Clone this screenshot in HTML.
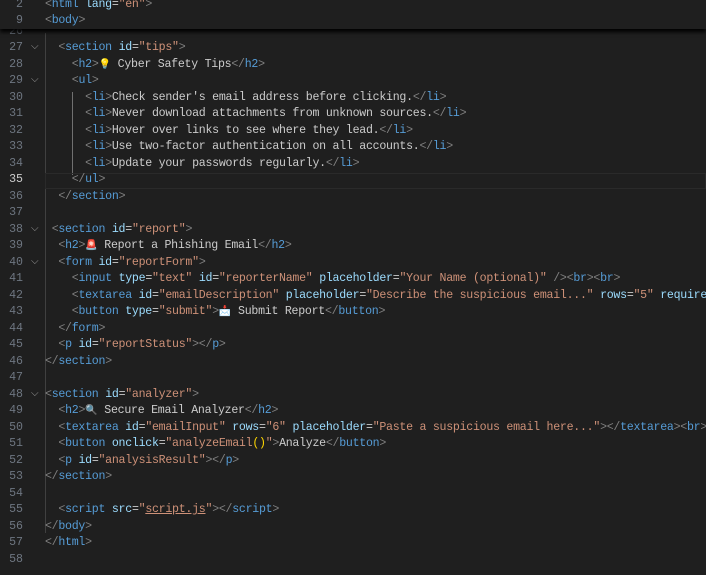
<!DOCTYPE html>
<html><head><meta charset="utf-8"><style>
body{margin:0;width:706px;height:573px;background:#1f1f1f;overflow:hidden;position:relative;font-family:"Liberation Mono",monospace;font-size:11.6px;letter-spacing:-0.27px;}
.w{position:absolute;left:0;top:1.5px;width:706px;height:573px}
.l{position:absolute;left:0;width:706px;height:16.5px;line-height:16.5px;white-space:pre;}
.n{position:absolute;left:0;width:23px;text-align:right;color:#6e7681;letter-spacing:0}
.c{position:absolute;left:45px;color:#cccccc;}
.f{position:absolute;left:31px;top:0;color:#999;font-size:10px;}
.b{color:#808080}.t{color:#569cd6}.a{color:#9cdcfe}.s{color:#ce9178}.y{color:#ffd700}
.g{position:absolute;width:1px;background:#404040;}
.sticky{position:absolute;left:0;top:0;width:706px;height:29px;background:#1f1f1f;box-shadow:0 3px 4px #000;z-index:2;overflow:hidden}
.e{font-family:"DejaVu Sans",sans-serif;font-size:10px;letter-spacing:0}
</style></head><body>
<div class="w">
<div class="g" style="left:45px;top:31px;height:500px"></div>
<div class="g" style="left:72px;top:90px;height:83px;background:#707070"></div>
<div class="l" style="top:171px;left:45px;width:661px;border:1px solid #2a2a2a;box-sizing:border-box;height:16.5px"></div>

<div class="l" style="top:22.2px"><span class="n">26</span></div>
<div class="l" style="top:38.7px"><span class="n">27</span><span class="f">⌵</span><span class="c">  <span class="b">&lt;</span><span class="t">section</span> <span class="a">id</span>=<span class="s">"tips"</span><span class="b">&gt;</span></span></div>
<div class="l" style="top:55.2px"><span class="n">28</span><span class="c">    <span class="b">&lt;</span><span class="t">h2</span><span class="b">&gt;</span><span class="e">💡</span> Cyber Safety Tips<span class="b">&lt;/</span><span class="t">h2</span><span class="b">&gt;</span></span></div>
<div class="l" style="top:71.7px"><span class="n">29</span><span class="f">⌵</span><span class="c">    <span class="b">&lt;</span><span class="t">ul</span><span class="b">&gt;</span></span></div>
<div class="l" style="top:88.2px"><span class="n">30</span><span class="c">      <span class="b">&lt;</span><span class="t">li</span><span class="b">&gt;</span>Check sender's email address before clicking.<span class="b">&lt;/</span><span class="t">li</span><span class="b">&gt;</span></span></div>
<div class="l" style="top:104.7px"><span class="n">31</span><span class="c">      <span class="b">&lt;</span><span class="t">li</span><span class="b">&gt;</span>Never download attachments from unknown sources.<span class="b">&lt;/</span><span class="t">li</span><span class="b">&gt;</span></span></div>
<div class="l" style="top:121.2px"><span class="n">32</span><span class="c">      <span class="b">&lt;</span><span class="t">li</span><span class="b">&gt;</span>Hover over links to see where they lead.<span class="b">&lt;/</span><span class="t">li</span><span class="b">&gt;</span></span></div>
<div class="l" style="top:137.7px"><span class="n">33</span><span class="c">      <span class="b">&lt;</span><span class="t">li</span><span class="b">&gt;</span>Use two-factor authentication on all accounts.<span class="b">&lt;/</span><span class="t">li</span><span class="b">&gt;</span></span></div>
<div class="l" style="top:154.2px"><span class="n">34</span><span class="c">      <span class="b">&lt;</span><span class="t">li</span><span class="b">&gt;</span>Update your passwords regularly.<span class="b">&lt;/</span><span class="t">li</span><span class="b">&gt;</span></span></div>
<div class="l" style="top:170.7px"><span class="n" style="color:#cccccc">35</span><span class="c">    <span class="b">&lt;/</span><span class="t">ul</span><span class="b">&gt;</span></span></div>
<div class="l" style="top:187.2px"><span class="n">36</span><span class="c">  <span class="b">&lt;/</span><span class="t">section</span><span class="b">&gt;</span></span></div>
<div class="l" style="top:203.7px"><span class="n">37</span></div>
<div class="l" style="top:220.2px"><span class="n">38</span><span class="f">⌵</span><span class="c"> <span class="b">&lt;</span><span class="t">section</span> <span class="a">id</span>=<span class="s">"report"</span><span class="b">&gt;</span></span></div>
<div class="l" style="top:236.7px"><span class="n">39</span><span class="c">  <span class="b">&lt;</span><span class="t">h2</span><span class="b">&gt;</span><span class="e">🚨</span> Report a Phishing Email<span class="b">&lt;/</span><span class="t">h2</span><span class="b">&gt;</span></span></div>
<div class="l" style="top:253.2px"><span class="n">40</span><span class="f">⌵</span><span class="c">  <span class="b">&lt;</span><span class="t">form</span> <span class="a">id</span>=<span class="s">"reportForm"</span><span class="b">&gt;</span></span></div>
<div class="l" style="top:269.7px"><span class="n">41</span><span class="c">    <span class="b">&lt;</span><span class="t">input</span> <span class="a">type</span>=<span class="s">"text"</span> <span class="a">id</span>=<span class="s">"reporterName"</span> <span class="a">placeholder</span>=<span class="s">"Your Name (optional)"</span> <span class="b">/&gt;&lt;</span><span class="t">br</span><span class="b">&gt;&lt;</span><span class="t">br</span><span class="b">&gt;</span></span></div>
<div class="l" style="top:286.2px"><span class="n">42</span><span class="c">    <span class="b">&lt;</span><span class="t">textarea</span> <span class="a">id</span>=<span class="s">"emailDescription"</span> <span class="a">placeholder</span>=<span class="s">"Describe the suspicious email..."</span> <span class="a">rows</span>=<span class="s">"5"</span> <span class="a">required</span></span></div>
<div class="l" style="top:302.7px"><span class="n">43</span><span class="c">    <span class="b">&lt;</span><span class="t">button</span> <span class="a">type</span>=<span class="s">"submit"</span><span class="b">&gt;</span><span class="e">📩</span> Submit Report<span class="b">&lt;/</span><span class="t">button</span><span class="b">&gt;</span></span></div>
<div class="l" style="top:319.2px"><span class="n">44</span><span class="c">  <span class="b">&lt;/</span><span class="t">form</span><span class="b">&gt;</span></span></div>
<div class="l" style="top:335.7px"><span class="n">45</span><span class="c">  <span class="b">&lt;</span><span class="t">p</span> <span class="a">id</span>=<span class="s">"reportStatus"</span><span class="b">&gt;&lt;/</span><span class="t">p</span><span class="b">&gt;</span></span></div>
<div class="l" style="top:352.2px"><span class="n">46</span><span class="c"><span class="b">&lt;/</span><span class="t">section</span><span class="b">&gt;</span></span></div>
<div class="l" style="top:368.7px"><span class="n">47</span></div>
<div class="l" style="top:385.2px"><span class="n">48</span><span class="f">⌵</span><span class="c"><span class="b">&lt;</span><span class="t">section</span> <span class="a">id</span>=<span class="s">"analyzer"</span><span class="b">&gt;</span></span></div>
<div class="l" style="top:401.7px"><span class="n">49</span><span class="c">  <span class="b">&lt;</span><span class="t">h2</span><span class="b">&gt;</span><span class="e">🔍</span> Secure Email Analyzer<span class="b">&lt;/</span><span class="t">h2</span><span class="b">&gt;</span></span></div>
<div class="l" style="top:418.2px"><span class="n">50</span><span class="c">  <span class="b">&lt;</span><span class="t">textarea</span> <span class="a">id</span>=<span class="s">"emailInput"</span> <span class="a">rows</span>=<span class="s">"6"</span> <span class="a">placeholder</span>=<span class="s">"Paste a suspicious email here..."</span><span class="b">&gt;&lt;/</span><span class="t">textarea</span><span class="b">&gt;&lt;</span><span class="t">br</span><span class="b">&gt;</span></span></div>
<div class="l" style="top:434.7px"><span class="n">51</span><span class="c">  <span class="b">&lt;</span><span class="t">button</span> <span class="a">onclick</span>=<span class="s">"analyzeEmail<span class="y">()</span>"</span><span class="b">&gt;</span>Analyze<span class="b">&lt;/</span><span class="t">button</span><span class="b">&gt;</span></span></div>
<div class="l" style="top:451.2px"><span class="n">52</span><span class="c">  <span class="b">&lt;</span><span class="t">p</span> <span class="a">id</span>=<span class="s">"analysisResult"</span><span class="b">&gt;&lt;/</span><span class="t">p</span><span class="b">&gt;</span></span></div>
<div class="l" style="top:467.7px"><span class="n">53</span><span class="c"><span class="b">&lt;/</span><span class="t">section</span><span class="b">&gt;</span></span></div>
<div class="l" style="top:484.2px"><span class="n">54</span></div>
<div class="l" style="top:500.7px"><span class="n">55</span><span class="c">  <span class="b">&lt;</span><span class="t">script</span> <span class="a">src</span>=<span class="s">"<u>script.js</u>"</span><span class="b">&gt;&lt;/</span><span class="t">script</span><span class="b">&gt;</span></span></div>
<div class="l" style="top:517.2px"><span class="n">56</span><span class="c"><span class="b">&lt;/</span><span class="t">body</span><span class="b">&gt;</span></span></div>
<div class="l" style="top:533.7px"><span class="n">57</span><span class="c"><span class="b">&lt;/</span><span class="t">html</span><span class="b">&gt;</span></span></div>
<div class="l" style="top:550.2px"><span class="n">58</span></div>
</div>

<div class="sticky">
<div class="l" style="top:-3.5px"><span class="n">2</span><span class="c"><span class="b">&lt;</span><span class="t">html</span> <span class="a">lang</span>=<span class="s">"en"</span><span class="b">&gt;</span></span></div>
<div class="l" style="top:13px"><span class="n">9</span><span class="c"><span class="b">&lt;</span><span class="t">body</span><span class="b">&gt;</span></span></div>
</div>
</body></html>
